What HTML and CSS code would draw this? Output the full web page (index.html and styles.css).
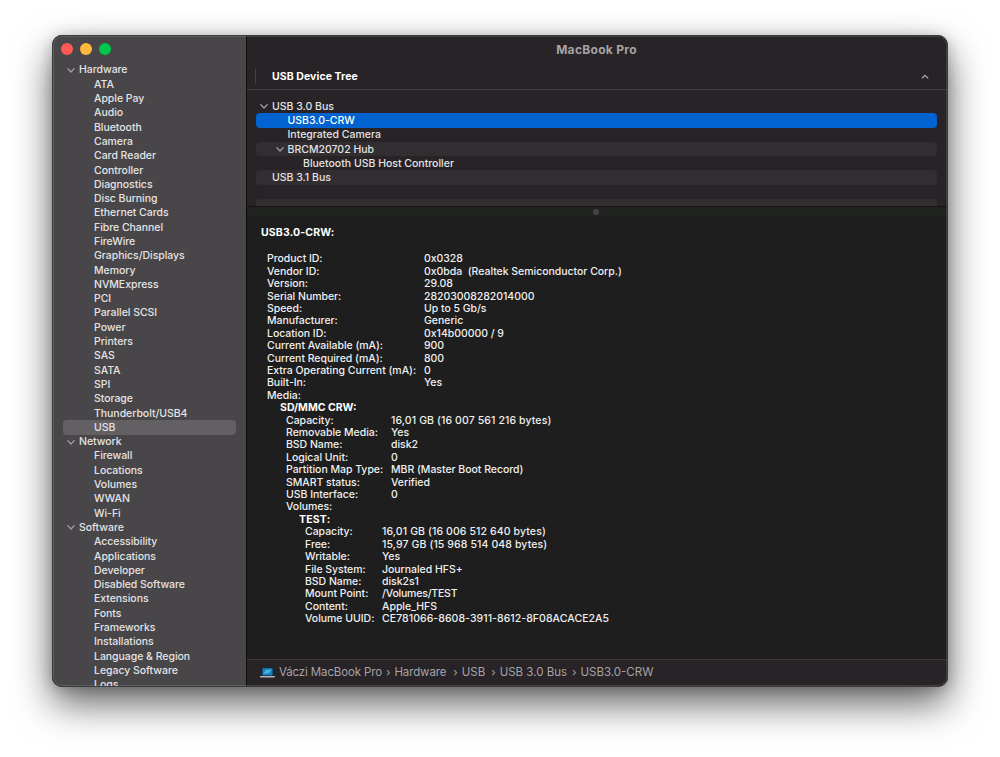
FILE: index.html
```html
<!DOCTYPE html>
<html lang="en">
<head>
    <meta charset="UTF-8">
    <title>MacBook Pro</title>
    <link rel="stylesheet" href="styles.css">
</head>
<body>
    <svg width="0" height="0" class="defs">
        <symbol id="chevron" viewBox="0 0 10 8"><path d="M1.8 2.6 L5 6 L8.2 2.6" fill="none" stroke="currentColor" stroke-width="1.3" stroke-linecap="round" stroke-linejoin="round"/></symbol>
    </svg>
    <div class="window">
        <div class="sidebar">
            <div class="lights">
                <span class="light red"></span>
                <span class="light yellow"></span>
                <span class="light green"></span>
            </div>
            <ul class="nav">
                <li class="group"><svg class="chevron"><use href="#chevron"/></svg><span>Hardware</span></li>
                <li><span>ATA</span></li>
                <li><span>Apple Pay</span></li>
                <li><span>Audio</span></li>
                <li><span>Bluetooth</span></li>
                <li><span>Camera</span></li>
                <li><span>Card Reader</span></li>
                <li><span>Controller</span></li>
                <li><span>Diagnostics</span></li>
                <li><span>Disc Burning</span></li>
                <li><span>Ethernet Cards</span></li>
                <li><span>Fibre Channel</span></li>
                <li><span>FireWire</span></li>
                <li><span>Graphics/Displays</span></li>
                <li><span>Memory</span></li>
                <li><span>NVMExpress</span></li>
                <li><span>PCI</span></li>
                <li><span>Parallel SCSI</span></li>
                <li><span>Power</span></li>
                <li><span>Printers</span></li>
                <li><span>SAS</span></li>
                <li><span>SATA</span></li>
                <li><span>SPI</span></li>
                <li><span>Storage</span></li>
                <li><span>Thunderbolt/USB4</span></li>
                <li class="active"><span>USB</span></li>
                <li class="group"><svg class="chevron"><use href="#chevron"/></svg><span>Network</span></li>
                <li><span>Firewall</span></li>
                <li><span>Locations</span></li>
                <li><span>Volumes</span></li>
                <li><span>WWAN</span></li>
                <li><span>Wi-Fi</span></li>
                <li class="group"><svg class="chevron"><use href="#chevron"/></svg><span>Software</span></li>
                <li><span>Accessibility</span></li>
                <li><span>Applications</span></li>
                <li><span>Developer</span></li>
                <li><span>Disabled Software</span></li>
                <li><span>Extensions</span></li>
                <li><span>Fonts</span></li>
                <li><span>Frameworks</span></li>
                <li><span>Installations</span></li>
                <li><span>Language &amp; Region</span></li>
                <li><span>Legacy Software</span></li>
                <li><span>Logs</span></li>
            </ul>
        </div>
        <div class="main">
            <div class="titlebar">MacBook Pro</div>
            <div class="tree-header">
                <span class="tree-title">USB Device Tree</span>
                <svg class="sort" viewBox="0 0 8 6"><path d="M1.2 4 L4 1.4 L6.8 4" fill="none" stroke="currentColor" stroke-width="1.3" stroke-linecap="round"/></svg>
            </div>
            <div class="tree">
                <div class="row"><svg class="chevron"><use href="#chevron"/></svg><span>USB 3.0 Bus</span></div>
                <div class="row level-2 selected"><span>USB3.0-CRW</span></div>
                <div class="row level-2"><span>Integrated Camera</span></div>
                <div class="row level-2 striped"><svg class="chevron"><use href="#chevron"/></svg><span>BRCM20702 Hub</span></div>
                <div class="row level-3"><span>Bluetooth USB Host Controller</span></div>
                <div class="row striped"><span>USB 3.1 Bus</span></div>
                <div class="row"></div>
                <div class="row striped"></div>
            </div>
            <div class="splitter"><span class="knob"></span></div>
            <div class="details">
                <h3>USB3.0-CRW:</h3>
                <dl class="device">
                    <dt>Product ID:</dt><dd>0x0328</dd>
                    <dt>Vendor ID:</dt><dd>0x0bda&nbsp; (Realtek Semiconductor Corp.)</dd>
                    <dt>Version:</dt><dd>29.08</dd>
                    <dt>Serial Number:</dt><dd>28203008282014000</dd>
                    <dt>Speed:</dt><dd>Up to 5 Gb/s</dd>
                    <dt>Manufacturer:</dt><dd>Generic</dd>
                    <dt>Location ID:</dt><dd>0x14b00000 / 9</dd>
                    <dt>Current Available (mA):</dt><dd>900</dd>
                    <dt>Current Required (mA):</dt><dd>800</dd>
                    <dt>Extra Operating Current (mA):</dt><dd>0</dd>
                    <dt>Built-In:</dt><dd>Yes</dd>
                    <dt>Media:</dt><dd></dd>
                </dl>
                <h4>SD/MMC CRW:</h4>
                <dl class="media">
                    <dt>Capacity:</dt><dd class="size">16,01 GB (16 007 561 216 bytes)</dd>
                    <dt>Removable Media:</dt><dd>Yes</dd>
                    <dt>BSD Name:</dt><dd>disk2</dd>
                    <dt>Logical Unit:</dt><dd>0</dd>
                    <dt>Partition Map Type:</dt><dd>MBR (Master Boot Record)</dd>
                    <dt>SMART status:</dt><dd>Verified</dd>
                    <dt>USB Interface:</dt><dd>0</dd>
                    <dt>Volumes:</dt><dd></dd>
                </dl>
                <h4 class="volume-name">TEST:</h4>
                <dl class="volume">
                    <dt>Capacity:</dt><dd class="size">16,01 GB (16 006 512 640 bytes)</dd>
                    <dt>Free:</dt><dd class="size">15,97 GB (15 968 514 048 bytes)</dd>
                    <dt>Writable:</dt><dd>Yes</dd>
                    <dt>File System:</dt><dd>Journaled HFS+</dd>
                    <dt>BSD Name:</dt><dd>disk2s1</dd>
                    <dt>Mount Point:</dt><dd class="mount">/Volumes/TEST</dd>
                    <dt>Content:</dt><dd>Apple_HFS</dd>
                    <dt>Volume UUID:</dt><dd class="uuid">CE781066-8608-3911-8612-8F08ACACE2A5</dd>
                </dl>
            </div>
            <div class="path">
                <svg class="laptop" viewBox="0 0 15 11">
                    <rect x="1.7" y="0.5" width="11.6" height="8.6" rx="0.8" fill="#10222e"/>
                    <rect x="2.4" y="1.2" width="10.2" height="7.2" fill="#1583bd"/>
                    <path d="M3 7 L6 3 L11.5 2.2 L9 6 Z" fill="#49b3dc"/>
                    <rect x="0" y="9.1" width="15" height="1.3" rx="0.6" fill="#b5b5b8"/>
                </svg>
                <span class="crumb computer">Váczi MacBook Pro</span>
                <span class="sep">›</span>
                <span class="crumb hardware">Hardware</span>
                <span class="sep">›</span>
                <span class="crumb usb">USB</span>
                <span class="sep">›</span>
                <span class="crumb bus">USB 3.0 Bus</span>
                <span class="sep">›</span>
                <span class="crumb">USB3.0-CRW</span>
            </div>
        </div>
    </div>
</body>
</html>
```
FILE: styles.css
```css
* {
    box-sizing: border-box;
}
body {
    margin: 0;
    padding: 35px 52px 0;
    height: 757px;
    overflow: hidden;
    background: #fff;
    font-family: Inter, "Liberation Sans", sans-serif;
    font-size: 10.5px;
    font-weight: 500;
    color: #e4e3e4;
    white-space: nowrap;
}
.defs {
    position: absolute;
}
.window {
    position: relative;
    display: flex;
    width: 896px;
    height: 652px;
    border-radius: 10px;
    overflow: hidden;
    background: #272327;
    box-shadow: 0 17px 38px rgba(0, 0, 0, 0.6), 0 2px 14px rgba(0, 0, 0, 0.2);
}
/* thin light rim over the window edge */
.window::after {
    content: "";
    position: absolute;
    inset: 0;
    border-radius: 10px;
    border: 1px solid #3a3b3b;
    box-shadow: inset 0 0 0 1px rgba(255, 255, 255, 0.13);
    pointer-events: none;
}
.sidebar {
    width: 195px;
    background: #484648;
    border-right: 1px solid #0c0c0c;
    overflow: hidden;
}
.lights {
    display: flex;
    gap: 7px;
    padding: 8px 0 0 8.5px;
    height: 27.8px;
}
.light {
    width: 12px;
    height: 12px;
    border-radius: 50%;
}
.red {
    background: #ff5a56;
}
.yellow {
    background: #ffb73c;
}
.green {
    background: #00c64c;
}
.nav {
    list-style: none;
    margin: 0;
    padding: 0 10px 0 11px;
}
.nav li {
    display: flex;
    align-items: center;
    height: 14.3px;
    padding-left: 31px;
    letter-spacing: -0.04px;
}
.nav .group {
    padding-left: 3px;
}
.nav .active {
    background: #636064;
    border-radius: 4px;
}
.chevron {
    width: 10px;
    height: 8px;
    margin-right: 3px;
    color: #a19fa1;
}
.main {
    flex: 1;
    display: flex;
    flex-direction: column;
    min-width: 0;
}
.titlebar {
    height: 29px;
    padding-right: 2px;
    line-height: 29px;
    text-align: center;
    font-size: 12px;
    font-weight: 700;
    letter-spacing: 0.3px;
    color: #a5a2a5;
}
.tree-header {
    display: flex;
    align-items: center;
    justify-content: space-between;
    height: 26px;
    padding: 0 19px 0 8px;
    border-bottom: 1px solid #413d41;
}
.tree-title {
    padding-left: 16px;
    border-left: 1px solid #454145;
    line-height: 15px;
    font-weight: 700;
    letter-spacing: 0.08px;
    color: #fff;
}
.sort {
    width: 8px;
    height: 6px;
    color: #a3a0a3;
}
.tree {
    height: 117px;
    padding: 9px 11px 0 9px;
    overflow: hidden;
    border-bottom: 1px solid #141414;
}
.row {
    display: flex;
    align-items: center;
    height: 14.3px;
    padding-left: 16px;
    border-radius: 4px;
}
.row .chevron {
    margin-left: -13px;
}
.level-2 {
    padding-left: 31.5px;
}
.level-3 {
    padding-left: 47px;
}
.striped {
    background: #322d31;
}
.selected {
    background: #0063cf;
    color: #fff;
}
.splitter {
    display: flex;
    justify-content: center;
    align-items: center;
    height: 9px;
    padding-right: 3px;
    background: #202220;
}
.knob {
    width: 6px;
    height: 6px;
    border-radius: 50%;
    background: #444;
}
.details {
    flex: 1;
    padding: 11.4px 14px 0;
    background: #1e1e1e;
    color: #f0f0f0;
    line-height: 12.42px;
}
h3, h4 {
    margin: 0;
    font-size: inherit;
    font-weight: 700;
    color: #fff;
}
h3 {
    margin-bottom: 13.5px;
    letter-spacing: 0.15px;
}
h4 {
    padding-left: 19px;
}
.volume-name {
    padding-left: 38px;
    letter-spacing: 0.2px;
}
dl {
    display: grid;
    margin: 0;
    grid-auto-rows: 12.42px;
    letter-spacing: -0.03px;
}
dd {
    margin: 0;
}
.device {
    grid-template-columns: 157px 1fr;
    padding-left: 6px;
}
.media {
    grid-template-columns: 105px 1fr;
    padding-left: 25px;
}
.volume {
    grid-template-columns: 77px 1fr;
    padding-left: 44px;
}
.size {
    letter-spacing: 0.11px;
}
.uuid {
    letter-spacing: 0.06px;
}
.mount {
    letter-spacing: -0.2px;
}
.path {
    display: flex;
    align-items: center;
    height: 28px;
    padding: 0 13px 3px;
    border-top: 1px solid #3c393b;
    font-size: 11.5px;
    font-weight: 400;
    color: #a6a3a6;
}
.laptop {
    width: 15px;
    height: 11px;
    margin-right: 4px;
}
.sep {
    margin: 0 4px;
}
.computer {
    letter-spacing: -0.13px;
}
.hardware {
    margin-right: 3px;
    letter-spacing: -0.13px;
}
.usb {
    margin-right: 2px;
}
.bus {
    margin-right: 1px;
}
```
